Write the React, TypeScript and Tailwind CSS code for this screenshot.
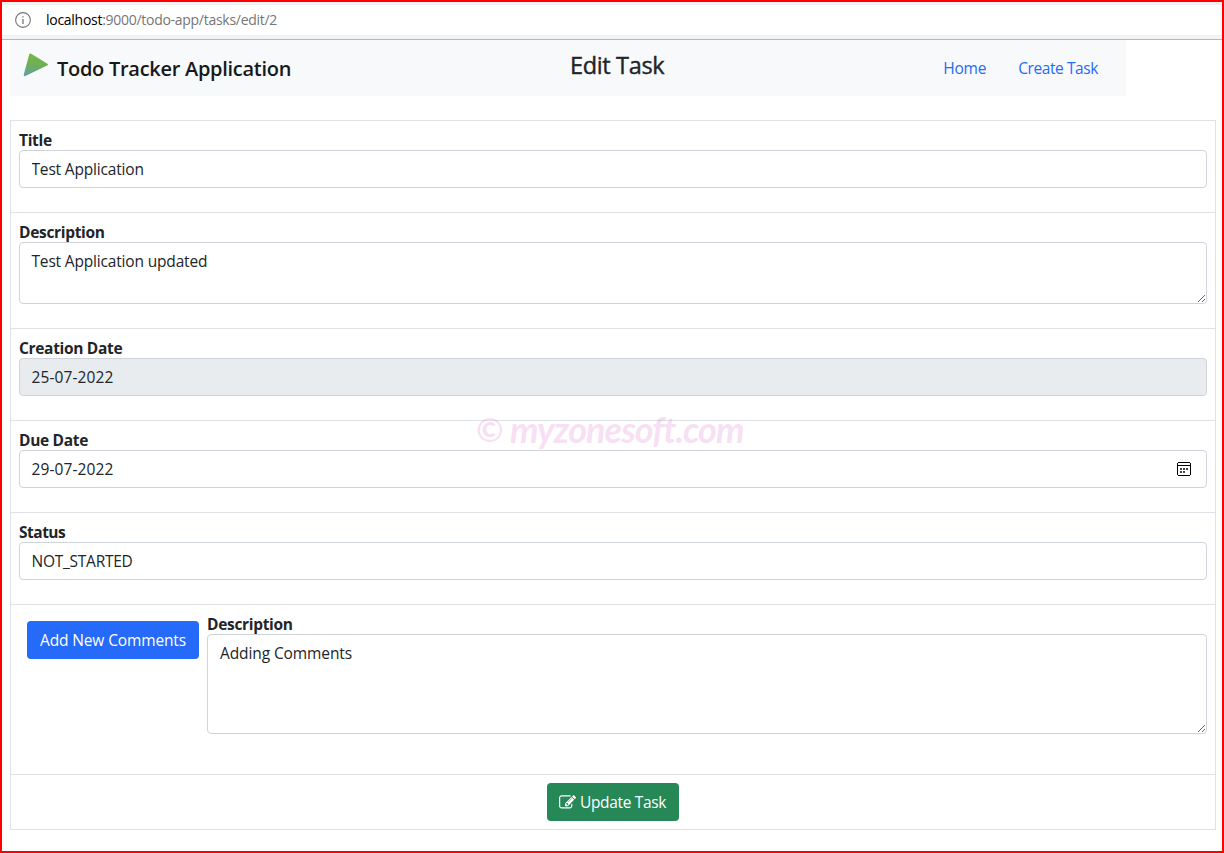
import type { ReactNode } from "react";

const control =
  "block w-full rounded-[4px] border border-[#ced4da] bg-white pl-[11.5px] pr-3 py-1.5 text-[15.5px] leading-6 text-[#212529] outline-none";

function Label({ children, gap }: { children: ReactNode; gap?: string }) {
  return (
    <label className={`block h-[21px] text-[15.5px] font-bold leading-[23px] ${gap ?? "tracking-[-0.32px]"}`}>
      {children}
    </label>
  );
}

function Row({ children, className = "" }: { children: ReactNode; className?: string }) {
  return <div className={`border-b border-[#dee2e6] px-2 pt-2 ${className}`}>{children}</div>;
}

function InfoIcon() {
  return (
    <svg width="16" height="16" viewBox="0 0 16 16" fill="none" stroke="#757575">
      <circle cx="8" cy="8" r="7.4" strokeWidth="1.1" />
      <path d="M8 7v5M8 4.2v1.4" strokeWidth="1.3" />
    </svg>
  );
}

function Logo() {
  return (
    <svg width="26" height="24" viewBox="0 0 26 24">
      <defs>
        <linearGradient id="leaf" x1="0.5" y1="0" x2="0.3" y2="1">
          <stop offset="0" stopColor="#78b83e" />
          <stop offset="0.5" stopColor="#6fae58" />
          <stop offset="1" stopColor="#64a1a0" />
        </linearGradient>
      </defs>
      <path d="M6.4 0.8 Q8 0 9 1.2 L24.8 11 Q25.4 11.6 24.6 12.2 L2.4 23 Q0.4 23.6 0.8 21.6Z" fill="url(#leaf)" />
    </svg>
  );
}

function CalendarIcon() {
  return (
    <svg width="14" height="14" viewBox="0 0 14 14" shapeRendering="crispEdges">
      <path
        d="M1 0h12v1h-12zM0 1h1v12h-1zM13 1h1v12h-1zM1 13h12v1h-12zM1 3h12v1h-12z"
        fill="#000"
      />
      <path d="M3 6h2v2h-2zM6 6h2v2h-2zM9 6h2v2h-2zM3 9h2v2h-2zM6 9h2v2h-2z" fill="#444" />
    </svg>
  );
}

function EditIcon() {
  return (
    <svg width="17" height="17" viewBox="0 0 1792 1792" fill="currentColor" className="-ml-px shrink-0">
      <path d="M888 1184l116-116-152-152-116 116v56h96v96h56zm440-720q-16-16-33 1l-350 350q-17 17-1 33t33-1l350-350q17-17 1-33zm80 594v190q0 119-84.5 203.5t-203.5 84.5h-832q-119 0-203.5-84.5t-84.5-203.5v-832q0-119 84.5-203.5t203.5-84.5h832q63 0 117 25 15 7 18 23 3 17-9 29l-49 49q-14 14-32 8-23-6-45-6h-832q-66 0-113 47t-47 113v832q0 66 47 113t113 47h832q66 0 113-47t47-113v-126q0-13 9-22l64-64q15-15 35-7t20 29zm-96-738l288 288-672 672h-288v-288zm444 132l-92 92-288-288 92-92q28-28 68-28t68 28l152 152q28 28 28 68t-28 68z" />
    </svg>
  );
}

export default function App() {
  return (
    <div className="relative flex h-[853px] w-[1224px] flex-col overflow-hidden border-2 border-[#ff0000] bg-white font-['Open_Sans','Noto_Sans',sans-serif] text-[15.5px] text-[#212529]">
      <div className="flex h-[38px] shrink-0 flex-col border-b border-[#b8b8b8] bg-[#f3f3f3] pt-[2px] pb-1">
        <div className="flex grow items-center border-t border-[#ededed] bg-white pl-[13px]">
          <InfoIcon />
          <span className="ml-[15px] text-[14px] leading-5 tracking-[-0.28px] text-[#767676]">
            <span className="text-black">localhost</span>:9000/todo-app/tasks/edit/2
          </span>
        </div>
      </div>

      <header className="ml-2 flex h-14 w-[1116px] shrink-0 items-center bg-[#f8f9fb] pl-[13px] pr-7">
        <div className="flex w-[547px] items-center">
          <span className="-mt-[7px]">
            <Logo />
          </span>
          <span className="mt-0.5 ml-2 text-[20px] font-semibold leading-7 tracking-[-0.28px] text-[#16191c]">
            Todo Tracker Application
          </span>
        </div>
        <h1 className="-mt-1.5 text-[23.5px] font-medium leading-7 tracking-[-0.35px] [-webkit-text-stroke:0.4px_#212529]">
          Edit Task
        </h1>
        <nav className="mt-0.5 ml-auto flex gap-8 text-[#256af8]">
          <a className="tracking-[-0.2px]">Home</a>
          <a className="tracking-[-0.42px]">Create Task</a>
        </nav>
      </header>

      <main className="mx-2 mt-6 w-[1206px] border border-b-0 border-[#dee2e6]">
        <Row className="h-[92px]">
          <Label>Title</Label>
          <input className={`${control} h-[38px] tracking-[-0.17px]`} defaultValue="Test Application" />
        </Row>
        <Row className="h-[116px]">
          <Label>Description</Label>
          <textarea className={`${control} h-[62px] tracking-[-0.17px]`} defaultValue="Test Application updated" />
        </Row>
        <Row className="h-[92px]">
          <Label>Creation Date</Label>
          <div className={`${control} h-[38px] bg-[#e9ecef]! tracking-[0.1px]`}>25-07-2022</div>
        </Row>
        <Row className="h-[92px]">
          <Label>Due Date</Label>
          <div className={`${control} flex h-[38px] items-center justify-between pr-[15px]! tracking-[0.1px]`}>
            29-07-2022
            <CalendarIcon />
          </div>
        </Row>
        <Row className="h-[92px]">
          <Label gap="tracking-[-0.5px]">Status</Label>
          <div className={`${control} h-[38px] tracking-[-0.25px]`}>NOT_STARTED</div>
        </Row>
        <Row className="flex h-[170px] gap-2">
          <button className="mt-2 ml-2 h-[38px] w-[172px] shrink-0 rounded-[4px] bg-[#256af8] pt-0.5 tracking-[-0.13px] text-white">
            Add New Comments
          </button>
          <div className="grow">
            <Label>Description</Label>
            <textarea className={`${control} h-[100px] pl-3! tracking-[-0.1px]`} defaultValue="Adding Comments" />
          </div>
        </Row>
        <Row className="flex h-[55px] justify-center">
          <button className="flex h-[38px] w-[132px] items-center justify-center gap-1 rounded-[4px] bg-[#268757] tracking-[-0.35px] text-white">
            <EditIcon />
            <span className="mt-0.5">Update Task</span>
          </button>
        </Row>
      </main>

      <div className="pointer-events-none absolute left-[474px] top-[403px] flex items-center whitespace-nowrap font-['Lato',sans-serif] font-bold italic text-[rgb(208,48,188)] opacity-15">
        <span className="w-[34px] text-[33px] leading-[48px]">©</span>
        <span className="text-[36px] leading-[48px] tracking-[-0.95px]">myzonesoft.com</span>
      </div>
    </div>
  );
}
